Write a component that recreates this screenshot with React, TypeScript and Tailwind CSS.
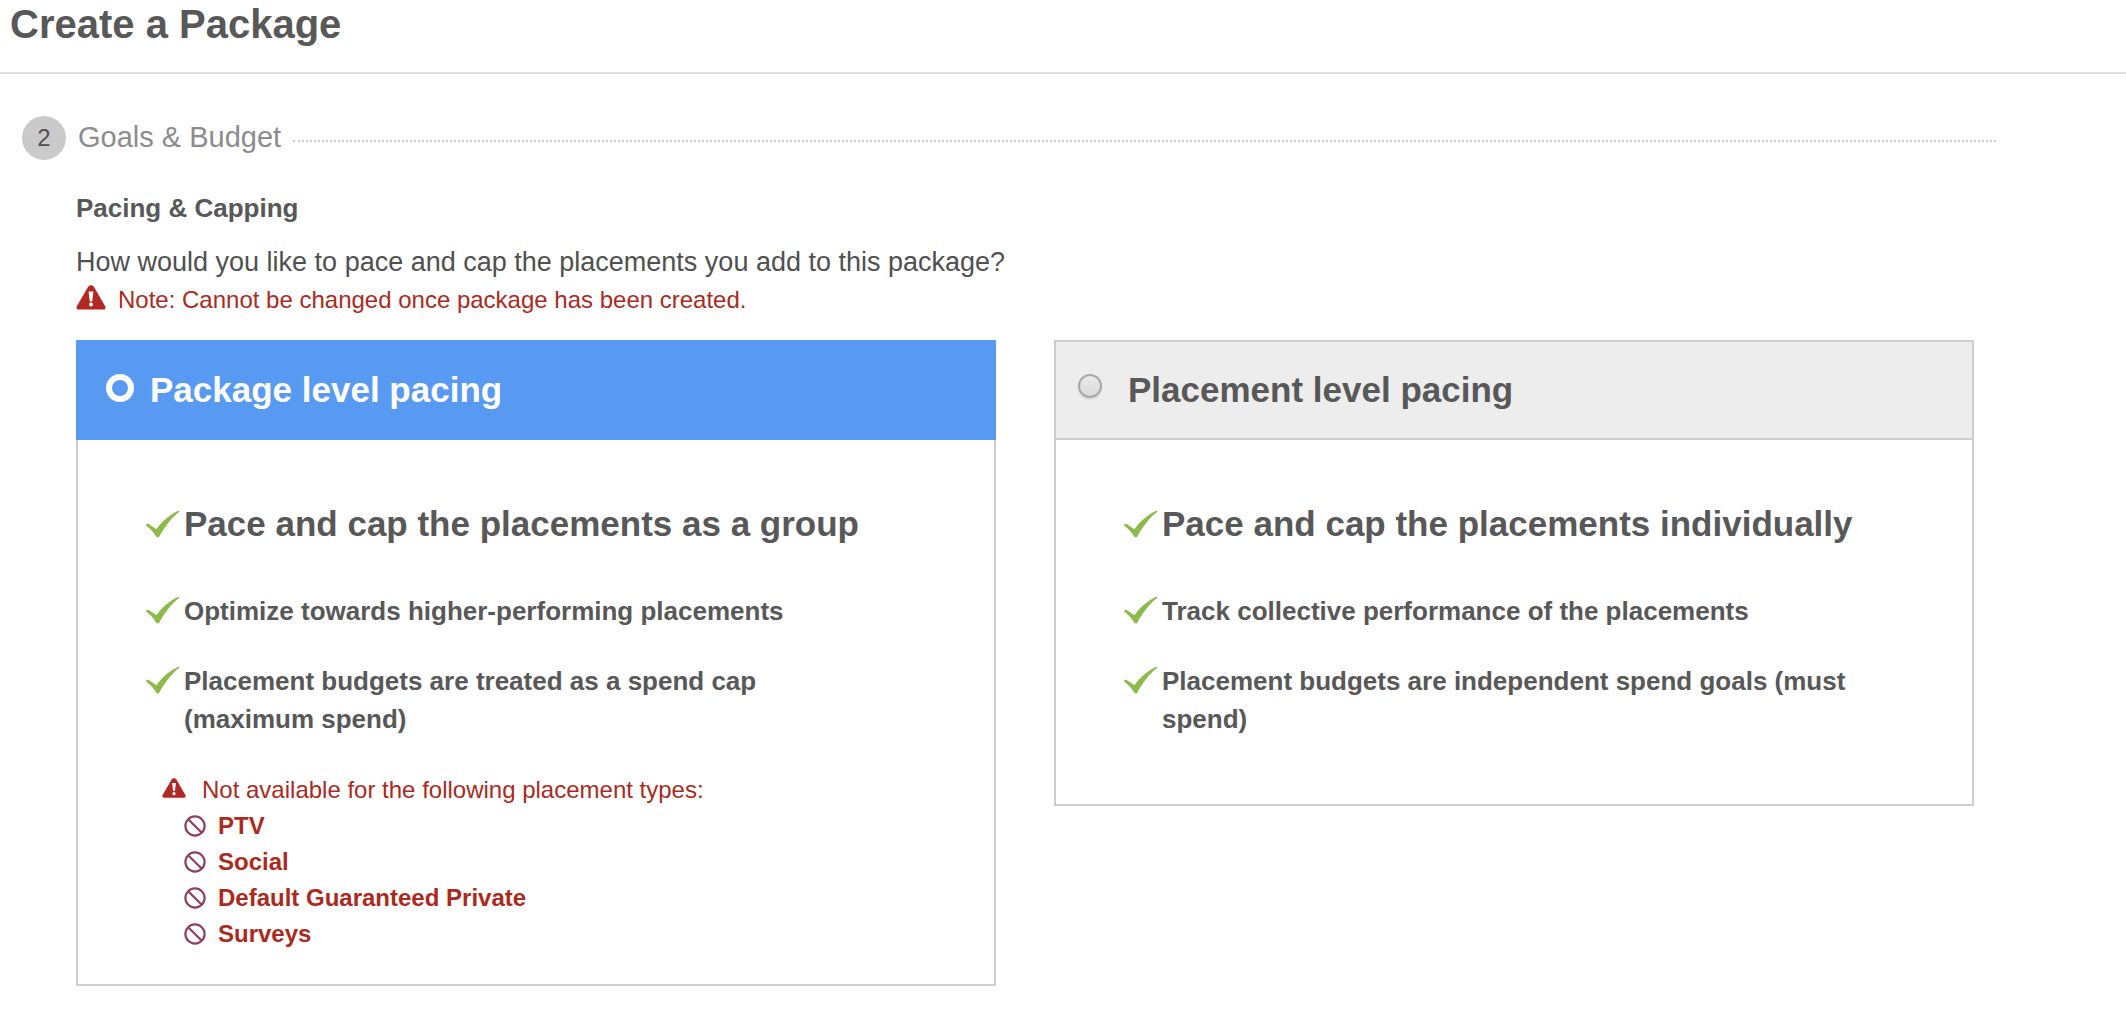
import { useState } from "react";

const FONT = "font-['Helvetica_Neue','Liberation_Sans',Arial,sans-serif]";

function CheckMark() {
  return (
    <svg viewBox="0 0 34 28" className="h-7 w-[34px] shrink-0" aria-hidden="true">
      <path
        d="M0.4 13.8C1.4 13.4 2.4 13.8 3.6 14.6C5.8 16.4 8 17.4 10.4 19.2C15.6 11.6 23 4.8 32.8 0.4L33.6 1.6C25.2 8.2 18.6 17 13 27.2H10.6C8 22.8 4.8 19 0.2 15.8Z"
        fill="#8cbb4b"
      />
    </svg>
  );
}

function WarningIcon({ className }: { className: string }) {
  return (
    <svg viewBox="0 0 30 25" className={className} aria-hidden="true">
      <path
        d="M12 2C13.4 -0.3 16.6 -0.3 18 2L29.2 21.2C30 23 29.2 24.6 27.4 24.6H2.6C0.8 24.6 0 23 0.8 21.2Z"
        fill="#b22822"
      />
      <path d="M12.6 6.4H17.4L16.2 16.4H13.8Z" fill="#fff" />
      <circle cx="15" cy="19.6" r="2" fill="#fff" />
    </svg>
  );
}

function BannedIcon() {
  return (
    <svg viewBox="0 0 22 22" className="h-[22px] w-[22px] shrink-0" aria-hidden="true">
      <circle cx="11" cy="11" r="9.6" fill="none" stroke="#91405a" strokeWidth="2.2" />
      <path d="M4.2 4.2L17.8 17.8" stroke="#91405a" strokeWidth="2.2" />
    </svg>
  );
}

type Option = { id: string; title: string; lead: string; points: string[]; unavailable: string[] };

const OPTIONS: Option[] = [
  {
    id: "package",
    title: "Package level pacing",
    lead: "Pace and cap the placements as a group",
    points: [
      "Optimize towards higher-performing placements",
      "Placement budgets are treated as a spend cap (maximum spend)",
    ],
    unavailable: ["PTV", "Social", "Default Guaranteed Private", "Surveys"],
  },
  {
    id: "placement",
    title: "Placement level pacing",
    lead: "Pace and cap the placements individually",
    points: [
      "Track collective performance of the placements",
      "Placement budgets are independent spend goals (must spend)",
    ],
    unavailable: [],
  },
];

function PacingCard({ option, selected, onSelect }: { option: Option; selected: boolean; onSelect: () => void }) {
  const hasExclusions = option.unavailable.length > 0;
  return (
    <section className="border-2 border-[#cdcdcd]">
      <label
        htmlFor={option.id}
        className={
          selected
            ? "-mx-0.5 -mt-0.5 flex h-[100px] items-center gap-4 bg-[#5899f2] pl-[30px] text-white"
            : "flex h-[98px] items-center gap-[26px] border-b-2 border-[#cdcdcd] bg-[#ededed] pl-[22px] text-[#585858]"
        }
      >
        <input
          id={option.id}
          type="radio"
          name="pacing"
          checked={selected}
          onChange={onSelect}
          className={
            selected
              ? "mb-1 h-7 w-7 shrink-0 appearance-none rounded-full border-[6px] border-white"
              : "mb-2 h-6 w-6 shrink-0 appearance-none rounded-full border-2 border-[#a8a8a8] bg-linear-to-b from-[#ebebeb] to-[#dadada] shadow-[0_2px_1px_#dcdcdc]"
          }
        />
        <span className="text-[35px] font-bold">{option.title}</span>
      </label>
      <div className={hasExclusions ? "pt-[58px] pb-8 pl-[68px]" : "pt-[58px] pb-[66px] pl-[68px]"}>
        <ul className="flex flex-col gap-8 pr-28 text-[26px] leading-[38px] font-bold text-[#585858]">
          <li className="mb-2.5 flex items-start gap-1 text-[35px] leading-[52px]">
            <span className="pt-3">
              <CheckMark />
            </span>
            {option.lead}
          </li>
          {option.points.map((point) => (
            <li key={point} className="flex items-start gap-1">
              <span className="pt-1">
                <CheckMark />
              </span>
              {point}
            </li>
          ))}
        </ul>
        {hasExclusions && (
          <div className="mt-[34px] pl-4 text-[#ac2a1d]">
            <p className="flex items-center gap-4 text-2xl leading-9">
              <WarningIcon className="mb-1 h-5 w-6" />
              Not available for the following placement types:
            </p>
            <ul className="pl-[22px] text-2xl leading-9 font-bold">
              {option.unavailable.map((name) => (
                <li key={name} className="flex items-center gap-3">
                  <BannedIcon />
                  {name}
                </li>
              ))}
            </ul>
          </div>
        )}
      </div>
    </section>
  );
}

export default function App() {
  const [selected, setSelected] = useState("package");
  return (
    <main className={`min-h-screen bg-white text-[#505050] ${FONT}`}>
      <header className="border-b-2 border-[#dcdcdc] pb-6 pl-[10px]">
        <h1 className="text-[40px] leading-12 font-bold text-[#585858]">Create a Package</h1>
      </header>
      <div className="pt-[42px] pr-[130px] pl-[22px]">
        <div className="flex items-center">
          <span className="flex h-11 w-11 items-center justify-center rounded-full bg-[#cacaca] text-2xl">2</span>
          <h2 className="ml-3 text-[29px] text-[#8c8c8c]">Goals &amp; Budget</h2>
          <div className="mt-1.5 ml-3 grow border-b-2 border-dotted border-[#cacaca]" />
        </div>
        <div className="pt-[30px] pr-[22px] pl-[54px]">
          <h3 className="text-[26px] leading-9 font-bold text-[#585858]">Pacing &amp; Capping</h3>
          <p className="mt-[18px] text-[27px] leading-9">
            How would you like to pace and cap the placements you add to this package?
          </p>
          <p className="mt-0.5 flex items-center gap-3 text-2xl leading-9 text-[#ac2a1d]">
            <WarningIcon className="mb-1.5 h-[25px] w-[30px]" />
            Note: Cannot be changed once package has been created.
          </p>
          <div className="mt-[22px] grid grid-cols-2 items-start gap-[58px]">
            {OPTIONS.map((option) => (
              <PacingCard
                key={option.id}
                option={option}
                selected={selected === option.id}
                onSelect={() => setSelected(option.id)}
              />
            ))}
          </div>
        </div>
      </div>
    </main>
  );
}
